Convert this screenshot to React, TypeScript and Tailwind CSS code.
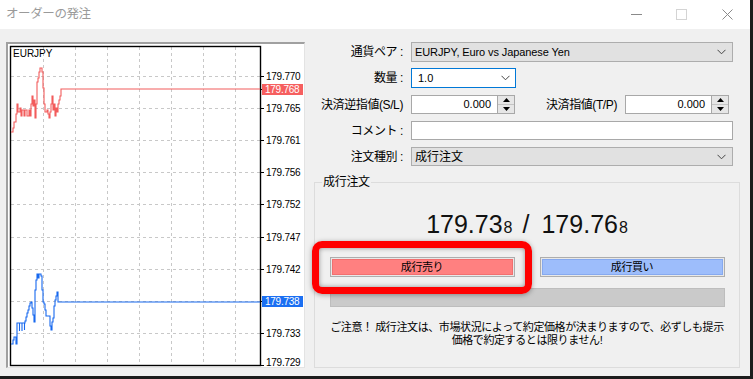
import React from "react";

const FONT = { fontFamily: '"Liberation Sans", "Noto Sans CJK JP", sans-serif' };

// price axis (y in page coords)
const levels: [number, string][] = [
  [76, "179.770"],
  [108, "179.765"],
  [140, "179.761"],
  [172, "179.756"],
  [204, "179.752"],
  [237, "179.747"],
  [269, "179.742"],
  [333, "179.733"],
  [362, "179.729"],
];
const vlines = [43, 75, 107, 139, 171, 203, 235];
const hlines = [76, 108, 140, 172, 204, 237, 269, 301, 333];

const askPath =
  "M11,132 H13 V128 H14 V122 H16 V114 H17 V104 H18 V112 H20 V108 H21 V116 H22 V110 H24 V116 H25 V110 H27 V116 H29 V110 H30 V116 H31 V104 H32 V96 H33 V106 H34 V100 H35 V118 H36 V104 H37 V82 H38 V78 H39 V72 H40 V68 H42 V72 H43 V88 H44 V104 H45 V112 H47 V110 H48 V114 H49 V118 H50 V112 H51 V104 H52 V96 H53 V110 H54 V104 H55 V116 H56 V108 H57 V112 H58 V104 H59 V100 H60 V96 H61 V89 H62 V89 H260";
const bidPath =
  "M11,344 H13 V340 H14 V337 H16 V344 H17 V323 H25 V321 H26 V317 H27 V313 H28 V310 H29 V306 H30 V303 H31 V302 H32 V308 H33 V315 H34 V322 H35 V290 H36 V280 H37 V274 H38 V278 H39 V274 H40 V274 H41 V276 H42 V290 H43 V302 H44 V304 H45 V310 H46 V316 H49 V316 H50 V326 H51 V330 H52 V322 H53 V318 H54 V306 H55 V300 H56 V296 H57 V292 H58 V302 H260 M17,331 V323 M19.5,323 V331 M22,323 V331 M24.5,323 V330";

function Chart() {
  return (
    <div className="w-[299px] h-[326px] border-t-2 border-l-2 border-[#a0a0a0] border-r border-b border-r-[#e3e3e3] border-b-[#e3e3e3] bg-white">
      <svg width="297" height="323" viewBox="8 44 297 323" className="block">
        {vlines.map((x) => (
          <line key={x} x1={x + 0.5} y1={47} x2={x + 0.5} y2={365} stroke="#c8c8c8" strokeDasharray="3 3" />
        ))}
        {hlines.map((y) => (
          <line key={y} x1={11} y1={y + 0.5} x2={260} y2={y + 0.5} stroke="#c8c8c8" strokeDasharray="3 3" />
        ))}
        <rect x={10.5} y={46.5} width={250} height={319} fill="none" stroke="#000" strokeWidth={1.4} />
        <path d={askPath} fill="none" stroke="#f25c5c" strokeWidth={1.1} />
        <path d={bidPath} fill="none" stroke="#1768ee" strokeWidth={1.1} />
        {[...hlines, 89, 365].map((y) => (
          <line key={"t" + y} x1={261} y1={y + 0.5} x2={264} y2={y + 0.5} stroke="#000" />
        ))}
        <text x={13} y={57} fontSize="10" fill="#000" style={FONT}>EURJPY</text>
        {levels.map(([y, t]) => (
          <text key={t} x={266} y={y + 4} fontSize="10" letterSpacing="-0.25" fill="#000" style={FONT}>
            {t}
          </text>
        ))}
        <rect x={262} y={84} width={41} height={11} fill="#f65f5f" />
        <text x={265} y={93} fontSize="10" letterSpacing="-0.25" fill="#fff" style={FONT}>179.768</text>
        <rect x={262} y={296} width={41} height={11} fill="#1b6ff2" />
        <text x={265} y={305} fontSize="10" letterSpacing="-0.25" fill="#fff" style={FONT}>179.738</text>
      </svg>
    </div>
  );
}

function Chevron() {
  return (
    <svg width="9" height="6" viewBox="0 0 9 6" className="shrink-0">
      <path d="M0.5,0.8 L4.5,4.8 L8.5,0.8" fill="none" stroke="#444" strokeWidth="1" />
    </svg>
  );
}

function Spinner() {
  return (
    <div className="w-[17px] h-full border border-l-0 border-[#a8a8a8] bg-[#e6e6e6] flex flex-col">
      <div className="flex-1 flex items-center justify-center border-b border-[#c4c4c4]">
        <svg width="7" height="4" viewBox="0 0 7 4"><path d="M0,4 L3.5,0 L7,4 Z" fill="#000" /></svg>
      </div>
      <div className="flex-1 flex items-center justify-center">
        <svg width="7" height="4" viewBox="0 0 7 4"><path d="M0,0 L3.5,4 L7,0 Z" fill="#000" /></svg>
      </div>
    </div>
  );
}

function NumberBox({ value }: { value: string }) {
  return (
    <div className="flex w-[104px] h-full">
      <div className="flex-1 h-full bg-white border border-[#a8a8a8] flex items-center justify-end pr-[6px] text-[11px]">
        {value}
      </div>
      <Spinner />
    </div>
  );
}

function Label({ children }: { children: React.ReactNode }) {
  return <div className="w-[92px] shrink-0 text-right text-[12px] tracking-[-0.4px] whitespace-nowrap leading-[14px]">{children}</div>;
}

export default function App() {
  return (
    <div className="w-[753px] h-[379px] bg-[#1c1c1c] overflow-hidden text-black" style={FONT}>
      <div className="relative w-[750px] h-[376px] bg-[#f0f0f0]">
        {/* title bar */}
        <div className="h-[29px] bg-white flex items-center">
          <span className="ml-[6px] text-[12.5px] text-[#9a9a9a] tracking-[-0.4px]">オーダーの発注</span>
          <div className="ml-auto flex items-center">
            <svg width="11" height="11" viewBox="0 0 11 11" className="mr-[34px]"><line x1="0" y1="5.5" x2="11" y2="5.5" stroke="#8a8a8a" /></svg>
            <svg width="11" height="11" viewBox="0 0 11 11" className="mr-[35px]"><rect x="0.5" y="0.5" width="10" height="10" fill="none" stroke="#d4d4d4" /></svg>
            <svg width="11" height="11" viewBox="0 0 11 11" className="mr-[17px]"><path d="M0.5,0.5 L10.5,10.5 M10.5,0.5 L0.5,10.5" stroke="#8a8a8a" /></svg>
          </div>
        </div>

        {/* body */}
        <div className="flex pl-[6px] pt-[13px]">
          <Chart />

          <div className="ml-[6px] w-[429px] flex flex-col">
            {/* form */}
            <div className="flex items-center h-[20px]">
              <Label>通貨ペア :</Label>
              <div className="ml-[8px] w-[322px] h-full bg-[#e1e1e1] border border-[#adadad] flex items-center pl-[3px] pr-[6px] text-[11px]">
                <span className="flex-1 tracking-[-0.1px]">EURJPY, Euro vs Japanese Yen</span>
                <Chevron />
              </div>
            </div>
            <div className="flex items-center h-[20px] mt-[6px]">
              <Label>数量 :</Label>
              <div className="ml-[8px] w-[105px] h-full bg-white border border-[#0078d7] flex items-center pl-[6px] pr-[5px] text-[11px]">
                <span className="flex-1">1.0</span>
                <Chevron />
              </div>
            </div>
            <div className="flex items-center h-[19px] mt-[7px]">
              <Label>決済逆指値(S/L)</Label>
              <div className="ml-[8px] h-full">
                <NumberBox value="0.000" />
              </div>
              <div className="flex-1 text-right text-[12px] tracking-[-0.4px] whitespace-nowrap">決済指値(T/P)</div>
              <div className="ml-[8px] h-full mr-[11px]">
                <NumberBox value="0.000" />
              </div>
            </div>
            <div className="flex items-center h-[19px] mt-[7px]">
              <Label>コメント :</Label>
              <div className="ml-[8px] w-[322px] h-full bg-white border border-[#a8a8a8]" />
            </div>
            <div className="flex items-center h-[19px] mt-[7px]">
              <Label>注文種別 :</Label>
              <div className="ml-[8px] w-[322px] h-full bg-[#e1e1e1] border border-[#adadad] flex items-center pl-[3px] pr-[6px]">
                <span className="flex-1 text-[12px]">成行注文</span>
                <Chevron />
              </div>
            </div>

            {/* market order group */}
            <div className="relative ml-[3px] mt-[16px] w-[426px] h-[186px] border border-[#dcdcdc] flex flex-col items-center">
              <span className="absolute left-[7px] top-[-8px] px-[1px] bg-[#f0f0f0] text-[12px] tracking-[-0.3px] leading-[14px]">成行注文</span>
              <div className="mt-[29px] h-[25px] leading-[25px] whitespace-nowrap text-[#111] flex items-baseline">
                <span className="text-[25px]">179.73</span>
                <span className="text-[16px] ml-[1px]">8</span>
                <span className="text-[25px] ml-[10px] mr-[12px]">/</span>
                <span className="text-[25px]">179.76</span>
                <span className="text-[16px] ml-[1px]">8</span>
              </div>
              <div className="mt-[20px] w-[395px] flex justify-between">
                <div className="w-[185px] h-[20px] border border-[#adadad] bg-[#e8e8e8] p-[1px]">
                  <div className="h-full bg-[#ff8080] border border-[#f26f6f] flex items-center justify-center text-[11px] tracking-[-0.4px]">
                    成行売り
                  </div>
                </div>
                <div className="w-[185px] h-[20px] border border-[#adadad] bg-[#e8e8e8] p-[1px]">
                  <div className="h-full bg-[#9dbdfb] border border-[#86a9ef] flex items-center justify-center text-[11px] tracking-[-0.4px]">
                    成行買い
                  </div>
                </div>
              </div>
              <div className="mt-[11px] w-[395px] h-[19px] bg-[#cacaca] border border-[#bdbdbd]" />
              <p className="mt-[14px] text-center text-[11px] leading-[13px] tracking-[-0.4px]">
                ご注意！ 成行注文は、市場状況によって約定価格が決まりますので、必ずしも提示
                <br />
                価格で約定するとは限りません!
              </p>
            </div>
          </div>
        </div>

        {/* highlight annotation */}
        <div className="absolute left-[312px] top-[241px] w-[220px] h-[53px] border-[7px] border-[#ff0000] rounded-[10px] shadow-[0_1px_5px_rgba(0,0,0,0.35),inset_0_0_5px_rgba(0,0,0,0.4)]" />
      </div>
    </div>
  );
}
